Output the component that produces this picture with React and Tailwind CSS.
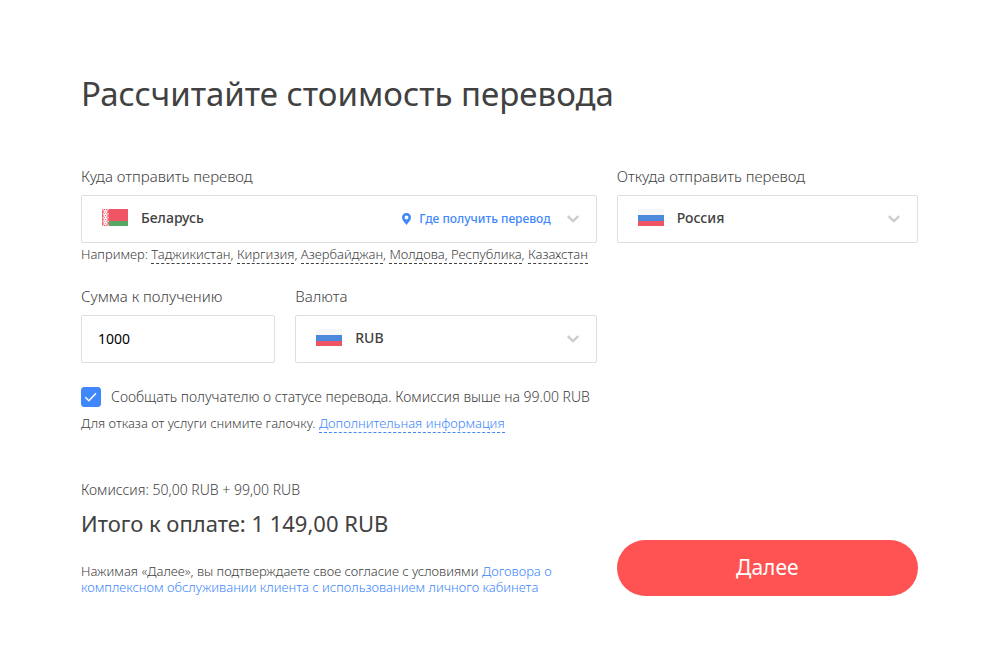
import { useState } from "react";

const EXAMPLES = [
  "Таджикистан",
  "Киргизия",
  "Азербайджан",
  "Молдова, Республика",
  "Казахстан",
];

function RussiaFlag() {
  return (
    <svg viewBox="0 0 26 17" className="w-[26px] h-[17px]" aria-hidden="true">
      <rect width="26" height="6" fill="#f5f7f9" />
      <rect y="6" width="26" height="6" fill="#4a89dc" />
      <rect y="12" width="26" height="5" fill="#f05566" />
    </svg>
  );
}

function BelarusFlag() {
  return (
    <svg viewBox="0 0 26 17" className="w-[26px] h-[17px]" aria-hidden="true">
      <rect width="26" height="12" fill="#f05566" />
      <rect y="12" width="26" height="5" fill="#57a863" />
      <rect width="7" height="17" fill="#f05566" />
      <path
        d="M3.5 1L5 2.8 3.5 4.6 2 2.8zM3.5 4.8L5 6.6 3.5 8.4 2 6.6zM3.5 8.6L5 10.4 3.5 12.2 2 10.4zM3.5 12.4L5 14.2 3.5 16 2 14.2zM1.2 0v1.6M1.2 4v1.6M1.2 7.8v1.6M1.2 11.6v1.6M1.2 15.4V17M6 0v1.6M6 4v1.6M6 7.8v1.6M6 11.6v1.6M6 15.4V17"
        fill="none"
        stroke="#ffffff"
        strokeWidth="1.2"
      />
    </svg>
  );
}

function PinIcon() {
  return (
    <svg viewBox="0 0 9 12" className="w-[9px] h-3" fill="#4087fc" aria-hidden="true">
      <path
        fillRule="evenodd"
        d="M4.5 0A4.4 4.4 0 0 0 0 4.4C0 7 2.6 9.2 4.5 12 6.4 9.2 9 7 9 4.4A4.4 4.4 0 0 0 4.5 0zm0 2.4a2 2 0 1 1 0 4 2 2 0 0 1 0-4z"
      />
    </svg>
  );
}

function ChevronIcon() {
  return (
    <svg
      viewBox="0 0 12 8"
      className="w-3 h-2"
      fill="none"
      stroke="#cccccc"
      strokeWidth="2.3"
      aria-hidden="true"
    >
      <path d="M0.8 1.2L6 6.2l5.2-5" />
    </svg>
  );
}

function Label({ htmlFor, children }) {
  return (
    <label htmlFor={htmlFor} className="block text-[15px] leading-5 font-light">
      {children}
    </label>
  );
}

function SelectField({ id, label, flag, options, action }) {
  return (
    <div>
      <Label htmlFor={id}>{label}</Label>
      <div className="relative mt-[9px]">
        <select
          id={id}
          className="block w-full h-12 pl-[59px] pr-12 pb-0.5 appearance-none rounded-xs border border-[#dedede] bg-white text-sm font-medium"
        >
          {options.map((option) => (
            <option key={option}>{option}</option>
          ))}
        </select>
        <div className="absolute inset-y-0 left-[21px] flex items-center pointer-events-none pb-[3px]">
          {flag}
        </div>
        <div className="absolute inset-y-0 right-[18px] flex items-center gap-4 pointer-events-none">
          {action}
          <ChevronIcon />
        </div>
      </div>
    </div>
  );
}

export default function App() {
  const [amount, setAmount] = useState("1000");
  const [notify, setNotify] = useState(true);

  return (
    <main className="pl-[81px] pr-[82px] pt-[70px] pb-12 bg-white text-[#414141] font-['Noto_Sans',sans-serif]">
      <h1 className="text-[33px] leading-[48px]">Рассчитайте стоимость перевода</h1>

      <form className="mt-12 grid grid-cols-8 gap-x-5" onSubmit={(e) => e.preventDefault()}>
        <div className="col-span-5">
          <SelectField
            id="to"
            label="Куда отправить перевод"
            flag={<BelarusFlag />}
            options={["Беларусь", ...EXAMPLES]}
            action={
              <a
                href="#points"
                className="flex items-center gap-2 text-xs font-medium text-[#4087fc] pointer-events-auto"
              >
                <PinIcon />
                Где получить перевод
              </a>
            }
          />
          <p className="mt-[3px] text-[13px] leading-4 font-light">
            Например:{" "}
            {EXAMPLES.map((name, i) => (
              <span key={name}>
                {i > 0 && ", "}
                <a href="#to" className="border-b border-dashed border-[#414141]">
                  {name}
                </a>
              </span>
            ))}
          </p>
        </div>

        <div className="col-span-3">
          <SelectField
            id="from"
            label="Откуда отправить перевод"
            flag={<RussiaFlag />}
            options={["Россия", "Беларусь"]}
          />
        </div>

        <div className="col-span-2 mt-6">
          <Label htmlFor="amount">Сумма к получению</Label>
          <input
            id="amount"
            type="text"
            inputMode="decimal"
            value={amount}
            onChange={(e) => setAmount(e.target.value)}
            className="block mt-[9px] w-full h-12 px-4 pb-0.5 rounded-xs border border-[#dedede] text-sm text-black"
          />
        </div>

        <div className="col-span-3 mt-6">
          <SelectField
            id="currency"
            label="Валюта"
            flag={<RussiaFlag />}
            options={["RUB", "USD", "EUR"]}
          />
        </div>

        <div className="col-span-5 col-start-1 mt-6">
          <div className="flex items-center gap-2.5">
            <span className="relative flex shrink-0">
              <input
                id="notify"
                type="checkbox"
                checked={notify}
                onChange={(e) => setNotify(e.target.checked)}
                className="size-5 appearance-none rounded-[3px] border border-[#4087fc] checked:bg-[#4087fc]"
              />
              {notify && (
                <svg
                  viewBox="0 0 20 20"
                  className="absolute inset-0 size-5 pointer-events-none"
                  fill="none"
                  stroke="#ffffff"
                  strokeWidth="1.5"
                  aria-hidden="true"
                >
                  <path d="M4.3 10.2l3.6 3.5L15 6.2" />
                </svg>
              )}
            </span>
            <label htmlFor="notify" className="text-sm leading-5 font-light whitespace-nowrap">
              Сообщать получателю о статусе перевода. Комиссия выше на 99.00 RUB
            </label>
          </div>
          <p className="mt-2 text-[13px] leading-4 font-light">
            Для отказа от услуги снимите галочку.{" "}
            <a href="#info" className="border-b border-dashed border-[#4087fc] text-[#4087fc]">
              Дополнительная информация
            </a>
          </p>
        </div>

        <div className="col-span-5 col-start-1 mt-[49px]">
          <p className="text-sm leading-5 font-light">Комиссия: 50,00 RUB + 99,00 RUB</p>
          <p className="mt-[7px] text-[22px] leading-8">Итого к оплате: 1 149,00 RUB</p>
          <p className="mt-6 pb-px pr-10 text-[13px] leading-4 font-light">
            Нажимая «Далее», вы подтверждаете свое согласие с условиями{" "}
            <a href="#terms" className="text-[#4087fc]">
              Договора о комплексном обслуживании клиента с использованием личного кабинета
            </a>
          </p>
        </div>

        <div className="col-span-3 self-end">
          <button
            type="submit"
            className="block w-full h-14 rounded-full bg-[#ff5353] text-white text-[21px]"
          >
            Далее
          </button>
        </div>
      </form>
    </main>
  );
}
